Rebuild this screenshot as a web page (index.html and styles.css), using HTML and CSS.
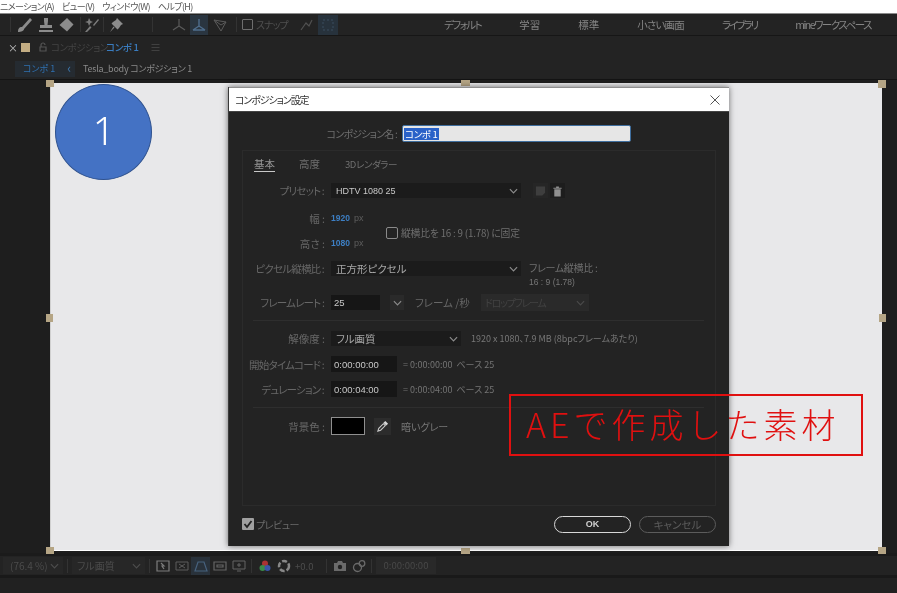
FILE: index.html
```html
<!DOCTYPE html>
<html lang="ja">
<head>
<meta charset="utf-8">
<title>コンポジション設定</title>
<link rel="stylesheet" href="styles.css">
</head>
<body>
<div class="app">
  <div class="menubar">
    <span>ニメーション(A)</span><span>ビュー(V)</span><span>ウィンドウ(W)</span><span>ヘルプ(H)</span>
  </div>

  <div class="toolbar">
    <div class="tools">
      <span class="tsep"></span>
      <svg class="ti t-brush" viewBox="0 0 16 16"><path d="M1 15c0-3 1-5 4-5l8-9 2 2-8 9c0 2-3 3-6 3z" fill="#8c8c8c"/></svg>
      <svg class="ti t-stamp" viewBox="0 0 16 16"><path d="M6 1h4v3L9.500 8H14v3H2V8h4.500L6 4zM1 13h14v2H1z" fill="#8c8c8c"/></svg>
      <svg class="ti t-eraser" viewBox="0 0 16 16"><path d="M9 1l6.500 6.500L9 14.500 1.500 8z" fill="#8c8c8c"/></svg>
      <span class="tsep s-a"></span>
      <svg class="ti t-roto" viewBox="0 0 16 16"><path d="M1 15l5-6 1.500 1.500L3 15zM9 8l5-6 1 1-5 6zM5 1l1.500 3L9 5 6.500 6 5 9 4 6 1 5l3-1z" fill="#7c7c7c"/></svg>
      <span class="tsep s-b"></span>
      <svg class="ti t-pin" viewBox="0 0 16 16"><path d="M9 1l6 6-2 1-2 3-1.500 1.500L3.500 6.500 5 5l3-2zM5.500 9.500l1 1L2 15z" fill="#8c8c8c"/></svg>
      <span class="tsep s-c"></span>
      <svg class="ti t-axis" viewBox="0 0 16 16"><path d="M8 2v7M8 9l-6 4M8 9l6 4" stroke="#5a5a5a" fill="none" stroke-width="1.200"/></svg>
      <span class="ti-on"><svg class="ti" viewBox="0 0 16 16"><path d="M8 2v7M8 9l-6 4M8 9l6 4M2 13h12" stroke="#4f6d8c" fill="none" stroke-width="1.400"/></svg></span>
      <svg class="ti t-axis3" viewBox="0 0 16 16"><path d="M2 3l12 2-5 9zM2 3l7 5 5-3" stroke="#5a5a5a" fill="none"/></svg>
      <span class="tsep s-d"></span>
      <span class="snapbox"></span>
      <span class="snaptext">スナップ</span>
      <svg class="ti t-snap" viewBox="0 0 16 16"><path d="M2 13l5-7 3 3 3-6" stroke="#505050" fill="none" stroke-width="1.200"/></svg>
      <span class="ti-on ti-on2"><svg class="ti" viewBox="0 0 16 16"><path d="M3 3h10v10H3z" stroke="#3a4c5e" fill="none" stroke-dasharray="2 2"/></svg></span>
    </div>
    <div class="workspaces">
      <span class="kana">デフォルト</span><span>学習</span><span>標準</span><span class="kana-s">小さい画面</span><span class="kana kana-l">ライブラリ</span><span class="kana">mineワークスペース</span>
    </div>
  </div>

  <div class="tabrow">
    <span class="tab-x">×</span>
    <span class="tab-swatch"></span>
    <svg class="tab-lock" viewBox="0 0 10 10"><path d="M2 5h6v4H2zM3 5V3a2 2 0 0 1 4 0" stroke="#555" fill="none" stroke-width="1.200"/></svg>
    <span class="tab-dim">コンポジション</span><span class="tab-name">コンポ 1</span>
    <span class="tab-menu">≡</span>
  </div>

  <div class="crumbs">
    <span class="crumb-on">コンポ 1<span class="crumb-chev">‹</span></span>
    <span class="crumb-next">Tesla_body コンポジション 1</span>
  </div>

  <div class="viewer">
    <div class="stage">
      <i class="h h-tl"></i><i class="h h-tc"></i><i class="h h-tr"></i>
      <i class="h h-ml"></i><i class="h h-mr"></i>
      <i class="h h-bl"></i><i class="h h-bc"></i><i class="h h-br"></i>
      <div class="circle">1</div>
    </div>
  </div>

  <div class="viewbar">
    <span class="vb-box vb-zoom">(76.4 %)<svg class="chev" viewBox="0 0 10 6"><path d="M1 1l4 4 4-4"/></svg></span>
    <span class="vsep vsep-z"></span>
    <span class="vb-box vb-qual">フル画質<svg class="chev" viewBox="0 0 10 6"><path d="M1 1l4 4 4-4"/></svg></span>
    <span class="vsep vsep-q"></span>
    <svg class="vi" viewBox="0 0 14 14"><path d="M1 2h12v10H1zM5 4l3 3H6l2 3" stroke="#7d7d7d" fill="none" stroke-width="1.200"/></svg>
    <svg class="vi" viewBox="0 0 14 14"><path d="M1 3h12v8H1zM4 5l6 4M10 5l-6 4" stroke="#5c5c5c" fill="none"/></svg>
    <span class="vi-on"><svg class="vi" viewBox="0 0 14 14"><path d="M1 12l3-9h6l3 9z" stroke="#47627e" fill="none" stroke-width="1.200"/></svg></span>
    <svg class="vi" viewBox="0 0 14 14"><path d="M1 3h12v8H1zM4 6h6v2H4z" stroke="#656565" fill="none" stroke-width="1.200"/></svg>
    <svg class="vi" viewBox="0 0 14 14"><path d="M1 2h12v8H1zM7 4v4M5 6h4M5 12h4" stroke="#656565" fill="none"/></svg>
    <span class="vsep vsep-i"></span>
    <svg class="vi" viewBox="0 0 14 14"><circle cx="7" cy="4.500" r="3" fill="#a33"/><circle cx="4.500" cy="9" r="3" fill="#3a8a4a"/><circle cx="9.500" cy="9" r="3" fill="#3a55a8"/></svg>
    <svg class="vi" viewBox="0 0 14 14"><circle cx="7" cy="7" r="5" stroke="#888" stroke-width="2.500" fill="none" stroke-dasharray="5 2"/></svg>
    <span class="vb-exp">+0.0</span>
    <span class="vsep vsep-a"></span>
    <svg class="vi" viewBox="0 0 14 14"><path d="M1 4h3l1-2h4l1 2h3v8H1z" fill="#6a6a6a"/><circle cx="7" cy="8" r="2.200" fill="#222"/></svg>
    <svg class="vi" viewBox="0 0 14 14"><circle cx="5.500" cy="8.500" r="4" stroke="#6a6a6a" fill="none" stroke-width="1.300"/><circle cx="10" cy="4.500" r="2.800" stroke="#6a6a6a" fill="none" stroke-width="1.300"/></svg>
    <span class="vsep vsep-b"></span>
    <span class="vb-time">0:00:00:00</span>
  </div>
  <div class="strip"></div>

  <div class="dialog">
    <div class="dlg-title">
      <span class="dlg-name">コンポジション設定</span>
      <svg class="dlg-close" viewBox="0 0 10 10"><path d="M.5.500l9 9M9.500.500l-9 9"/></svg>
    </div>
    <div class="dlg-body">
      <div class="name-row">
        <label class="name-label">コンポジション名 :</label>
        <div class="name-input"><span class="sel">コンポ 1</span></div>
      </div>

      <div class="group">
        <div class="tabs">
          <span class="tabs-on">基本</span><span>高度</span><span>3Dレンダラー</span>
        </div>

        <div class="row row-preset">
          <label class="lb lb-kana">プリセット :</label>
          <div class="select sel-wide strong">HDTV 1080 25<svg class="chev" viewBox="0 0 10 6"><path d="M1 1l4 4 4-4"/></svg></div>
          <span class="ico-btn ico-save"><svg viewBox="0 0 12 12"><path d="M1 1h10v7l-3 3H1z" fill="#3e3e3e"/></svg></span>
          <span class="ico-btn ico-trash"><svg viewBox="0 0 12 12"><path d="M1.500 2.500h9v1h-9zM4.500 1h3v1.500h-3zM2.500 4h7v8h-7z" fill="#8f8f8f"/></svg></span>
        </div>

        <div class="dims">
          <div class="dims-col">
            <div class="row"><label class="lb">幅 :</label><span class="blue">1920</span><span class="unit">px</span></div>
            <div class="row"><label class="lb">高さ :</label><span class="blue">1080</span><span class="unit">px</span></div>
          </div>
          <div class="lock"><span class="check"></span><span>縦横比を 16 : 9 (1.78) に固定</span></div>
        </div>

        <div class="row row-pixel">
          <label class="lb lb-kana">ピクセル縦横比 :</label>
          <div class="select sel-wide light">正方形ピクセル<svg class="chev" viewBox="0 0 10 6"><path d="M1 1l4 4 4-4"/></svg></div>
          <div class="aspect">
            <div>フレーム縦横比 :</div>
            <div class="aspect-val">16 : 9 (1.78)</div>
          </div>
        </div>

        <div class="row row-rate">
          <label class="lb lb-kana">フレームレート :</label>
          <div class="field field-rate">25</div>
          <span class="rate-chev"><svg class="chev" viewBox="0 0 10 6"><path d="M1 1l4 4 4-4"/></svg></span>
          <span class="rate-unit">フレーム /秒</span>
          <div class="drop"><span class="drop-text">ドロップフレーム</span><svg class="chev" viewBox="0 0 10 6"><path d="M1 1l4 4 4-4"/></svg></div>
        </div>

        <div class="hr hr-a"></div>

        <div class="row row-res">
          <label class="lb">解像度 :</label>
          <div class="select sel-res light">フル画質<svg class="chev" viewBox="0 0 10 6"><path d="M1 1l4 4 4-4"/></svg></div>
          <span class="info">1920 x 1080、7.9 MB (8bpcフレームあたり)</span>
        </div>

        <div class="row row-start">
          <label class="lb lb-kana">開始タイムコード :</label>
          <div class="field field-time">0:00:00:00</div>
          <span class="eq">= 0:00:00:00&nbsp; ベース 25</span>
        </div>

        <div class="row row-dur">
          <label class="lb lb-kana">デュレーション :</label>
          <div class="field field-time">0:00:04:00</div>
          <span class="eq">= 0:00:04:00&nbsp; ベース 25</span>
        </div>

        <div class="hr hr-b"></div>

        <div class="row row-bg">
          <label class="lb">背景色 :</label>
          <span class="swatch"></span>
          <span class="dropper"><svg viewBox="0 0 14 14"><path d="M2 12l1-3 5-5 2 2-5 5z" fill="none" stroke="#c8c8c8" stroke-width="1.200"/><path d="M8 3l2-2 3 3-2 2z" fill="#d8d8d8"/></svg></span>
          <span class="bg-name">暗いグレー</span>
        </div>
      </div>

      <div class="footer">
        <div class="preview">
          <span class="pv-check"><svg viewBox="0 0 12 12"><path d="M2.500 6l2.500 3 4.500-6" fill="none" stroke="#222" stroke-width="1.800"/></svg></span>
          <span>プレビュー</span>
        </div>
        <div class="btns">
          <span class="btn btn-ok">OK</span>
          <span class="btn btn-cancel">キャンセル</span>
        </div>
      </div>
    </div>
  </div>

  <div class="callout">AEで作成した素材</div>
</div>
</body>
</html>
```

FILE: styles.css
```css
* { box-sizing: border-box; }
html, body { margin: 0; padding: 0; }
body {
  width: 897px;
  height: 593px;
  overflow: hidden;
  background: #1e1e1e;
  font-family: "Noto Sans CJK JP", "Noto Sans", sans-serif;
  font-feature-settings: "palt";
}
.app {
  position: relative;
  width: 897px;
  height: 593px;
  overflow: hidden;
  display: flex;
  flex-direction: column;
  filter: blur(0.35px);
}

/* menu */
.menubar {
  height: 13px;
  flex: none;
  background: #fff;
  display: flex;
  align-items: center;
  gap: 8px;
  font-size: 9px;
  letter-spacing: -0.6px;
  line-height: 13px;
  color: #555;
  white-space: nowrap;
  overflow: hidden;
}

/* top toolbar */
.toolbar {
  height: 23px;
  flex: none;
  background: #232323;
  border-top: 1px solid #8a8a8a;
  border-bottom: 1px solid #161616;
  display: flex;
  align-items: center;
  justify-content: space-between;
}
.tools { display: flex; align-items: center; padding-left: 10px; }
.ti { width: 16px; height: 16px; flex: none; display: block; }
.tsep { width: 1px; height: 15px; background: #333; flex: none; }
.t-brush { margin-left: 6px; }
.t-stamp { margin-left: 5px; }
.t-eraser { margin-left: 4px; }
.s-a { margin-left: 6px; }
.t-roto { margin-left: 3px; }
.s-b { margin-left: 3px; }
.t-pin { margin-left: 4px; }
.s-c { margin-left: 28px; }
.t-axis { margin-left: 18px; }
.ti-on { background: #2a3540; padding: 2px 1px; margin-left: 3px; }
.t-axis3 { margin-left: 4px; }
.s-d { margin-left: 8px; }
.snapbox { width: 11px; height: 11px; border: 1.500px solid #6e6e6e; border-radius: 1px; margin-left: 5px; flex: none; }
.snaptext { font-size: 10px; letter-spacing: -1px; color: #4f4f4f; margin-left: 3px; width: 30px; white-space: nowrap; }
.t-snap { margin-left: 13px; }
.ti-on2 { background: #27323c; padding: 2px; margin-left: 3px; }
.workspaces {
  display: flex;
  gap: 38px;
  padding-right: 26px;
  font-size: 10.500px;
  color: #858585;
  white-space: nowrap;
}
.kana { letter-spacing: -1.500px; }
.kana-l { letter-spacing: -2px; }
.kana-s { letter-spacing: -0.800px; }

/* panel tab */
.tabrow {
  height: 22px;
  flex: none;
  background: #232323;
  display: flex;
  align-items: center;
  padding-left: 8px;
  font-size: 9.500px;
  white-space: nowrap;
}
.tab-x { color: #c0c0c0; font-size: 10px; width: 13px; }
.tab-swatch { width: 9px; height: 9px; background: #c3ad83; }
.tab-lock { width: 10px; height: 10px; margin-left: 8px; }
.tab-dim { color: #444; margin-left: 3px; width: 55px; letter-spacing: -0.500px; }
.tab-name { color: #3a7cbf; width: 40px; font-weight: 500; letter-spacing: -0.300px; }
.tab-menu { color: #4a4a4a; font-size: 11px; margin-left: 4px; }

/* breadcrumbs */
.crumbs {
  height: 22px;
  flex: none;
  background: #232323;
  border-bottom: 1px solid #141414;
  display: flex;
  align-items: center;
  padding-left: 15px;
  font-size: 9px;
  white-space: nowrap;
}
.crumb-on {
  background: #252b31;
  color: #2f70b0;
  height: 16px;
  width: 60px;
  line-height: 16px;
  padding-left: 8px;
  display: flex;
}
.crumb-chev { margin-left: 12px; color: #3d74a8; font-size: 13px; line-height: 14px; }
.crumb-next { color: #8a8a8a; margin-left: 8px; letter-spacing: -0.250px; }

/* viewer */
.viewer {
  flex: 1;
  min-height: 0;
  background: #1e1e1e;
  padding: 3px 15px 2px 50px;
  display: flex;
}
.stage {
  position: relative;
  flex: 1;
  background: #e8e8ea;
  border-left: 1px solid #d0d0d0;
  border-bottom: 1.500px solid #fff;
}
.h { position: absolute; width: 8px; height: 7px; background: #b5a585; }
.h-tl { left: -5px; top: -3px; }
.h-tc { left: 410px; top: -3px; width: 9px; height: 6px; }
.h-tr { right: -4px; top: -3px; height: 8px; }
.h-ml { left: -5px; top: 231px; width: 7px; height: 8px; }
.h-mr { right: -4px; top: 231px; width: 7px; height: 8px; }
.h-bl { left: -5px; bottom: -4px; }
.h-bc { left: 410px; bottom: -4px; width: 9px; height: 6px; }
.h-br { right: -4px; bottom: -4px; }
.circle {
  position: absolute;
  left: 4px;
  top: 1px;
  width: 97px;
  height: 96px;
  padding: 0 0 5px 1px;
  border-radius: 50%;
  background: #4472c4;
  border: 1.500px solid #2f528f;
  color: #fff;
  font-family: "Noto Sans", sans-serif;
  font-weight: 300;
  font-size: 39px;
  display: flex;
  align-items: center;
  justify-content: center;
}

/* bottom viewer bar */
.viewbar {
  height: 25px;
  flex: none;
  background: #232323;
  border-top: 3px solid #1b1b1b;
  border-bottom: 3px solid #191919;
  display: flex;
  align-items: center;
  padding-left: 3px;
  font-size: 10px;
  color: #4c4c4c;
  white-space: nowrap;
}
.strip { height: 15px; flex: none; background: #212121; }
.vb-box {
  height: 17px;
  background: #272727;
  display: flex;
  align-items: center;
  justify-content: space-between;
  padding: 0 4px 0 7px;
  flex: none;
}
.vb-zoom { width: 60px; }
.vb-qual { width: 73px; margin-left: 4px; padding-left: 5px; }
.vb-box .chev { stroke: #4d4d4d; }
.vi { width: 14px; height: 14px; flex: none; margin: 0 2.500px; display: block; }
.vi-on { background: #29323b; height: 18px; display: flex; align-items: center; }
.vsep { width: 1px; height: 14px; background: #333; flex: none; }
.vsep-z { margin-left: 4px; }
.vsep-q { margin-left: 4px; margin-right: 3px; }
.vsep-i { margin-left: 3px; margin-right: 3px; }
.vb-exp { color: #4d4d4d; margin-left: 2px; width: 22px; font-size: 9.500px; }
.vsep-a { margin: 0 3px 0 9px; }
.vsep-b { margin: 0 0 0 3px; }
.vb-time {
  background: #292929;
  height: 17px;
  width: 60px;
  line-height: 17px;
  text-align: center;
  color: #484848;
  font-size: 9.500px;
  margin-left: 4px;
  flex: none;
}

/* dialog */
.dialog {
  position: absolute;
  left: 228px;
  top: 87px;
  width: 501px;
  height: 459px;
  display: flex;
  flex-direction: column;
  box-shadow: 0 0 6px rgba(0, 0, 0, 0.55);
  border-left: 1px solid #3a3a3a;
}
.dlg-title {
  height: 25px;
  flex: none;
  background: #fff;
  border-top: 1px solid #8f8f8f;
  border-bottom: 1px solid #444;
  display: flex;
  align-items: center;
  justify-content: space-between;
  padding: 0 9px 0 6px;
  font-size: 10px;
  color: #333;
}
.dlg-name { letter-spacing: -1.100px; }
.dlg-close { width: 10px; height: 10px; stroke: #555; stroke-width: 1; fill: none; }
.dlg-body {
  flex: 1;
  background: #232323;
  padding: 13px 13px 0 13px;
  display: flex;
  flex-direction: column;
  font-size: 10px;
  color: #8a8a8a;
  white-space: nowrap;
}
.name-row { height: 17px; display: flex; align-items: center; }
.name-label { width: 160px; padding-right: 5px; text-align: right; color: #6f6f6f; letter-spacing: -0.800px; }
.name-input {
  width: 229px;
  height: 17px;
  background: #e6e6e6;
  border: 1px solid #3f6e9e;
  border-radius: 2px;
  padding-left: 1px;
  display: flex;
  align-items: center;
  font-size: 9.500px;
  letter-spacing: -0.300px;
}
.sel { background: #2a62c8; color: #fff; padding: 0 1px; line-height: 12px; }

.group {
  height: 356px;
  margin-top: 8px;
  border: 1px solid #2b2b2b;
  padding-top: 6px;
  display: flex;
  flex-direction: column;
}
.tabs {
  display: flex;
  height: 15px;
  padding-left: 11px;
  gap: 24px;
  font-size: 10.500px;
  line-height: 14px;
  color: #6f6f6f;
}
.tabs span { height: 15px; }
.tabs-on { color: #949494; border-bottom: 1.500px solid #c8c8c8; }
.tabs span:last-child { font-size: 9.500px; letter-spacing: -0.400px; margin-left: 1px; }

.row { display: flex; align-items: center; height: 15px; }
.lb { width: 83px; flex: none; text-align: right; color: #676767; padding-right: 1px; font-size: 10.500px; }
.lb-kana { letter-spacing: -0.800px; padding-right: 2px; }
.chev { width: 9px; height: 6px; flex: none; fill: none; stroke: #8c8c8c; stroke-width: 1.300; }

.select {
  margin-left: 5px;
  height: 15px;
  background: #1b1b1b;
  display: flex;
  align-items: center;
  justify-content: space-between;
  padding: 0 3px 0 5px;
  flex: none;
}
.sel-wide { width: 190px; }
.sel-res { width: 130px; }
.strong { color: #c8c8c8; font-size: 9px; font-weight: 500; font-family: "Liberation Sans", sans-serif; }
.light { color: #a8a8a8; font-size: 10.500px; }
.row-preset { margin-top: 11px; }
.ico-btn { width: 15px; height: 15px; display: flex; align-items: center; justify-content: center; flex: none; background: #262626; }
.ico-btn svg { width: 11px; height: 12px; display: block; }
.ico-save { margin-left: 12px; }
.ico-trash { margin-left: 2px; background: #1d1d1d; }

.dims { margin-top: 13px; height: 39px; display: flex; }
.dims-col { width: 143px; display: flex; flex-direction: column; justify-content: space-between; }
.dims-col .row { height: 14px; }
.blue { color: #3d7fc4; margin-left: 5px; font-size: 8.500px; font-family: "Liberation Sans", sans-serif; font-weight: 700; }
.unit { color: #5e5e5e; margin-left: 4px; font-size: 9px; font-family: "Liberation Sans", sans-serif; }
.lock { display: flex; align-items: center; margin-top: 14px; height: 15px; font-size: 9.800px; letter-spacing: -0.200px; color: #6f6f6f; }
.check { width: 12px; height: 12px; border: 1.500px solid #8a8a8a; border-radius: 2px; margin-right: 3px; flex: none; }

.row-pixel { margin-top: 11px; }
.aspect { margin-left: 8px; color: #6f6f6f; height: 15px; line-height: 14px; font-size: 10px; letter-spacing: -0.300px; }
.aspect-val { color: #777; font-size: 8.500px; line-height: 12px; margin-top: 1px; font-family: "Liberation Sans", sans-serif; letter-spacing: 0; }
.row-rate { margin-top: 19px; }
.field {
  margin-left: 5px;
  height: 15px;
  background: #161616;
  color: #c8c8c8;
  display: flex;
  align-items: center;
  padding-left: 3px;
  flex: none;
  font-size: 9.500px;
  font-family: "Liberation Sans", sans-serif;
}
.field-rate { width: 49px; }
.rate-chev { width: 14px; height: 15px; margin-left: 10px; background: #2a2a2a; display: flex; align-items: center; justify-content: center; flex: none; }
.rate-unit { margin-left: 11px; width: 66px; color: #676767; font-size: 10.500px; }
.drop {
  width: 108px;
  height: 17px;
  background: #2a2a2a;
  color: #424242;
  display: flex;
  align-items: center;
  justify-content: space-between;
  padding: 0 4px 0 4px;
  font-size: 10px;
  flex: none;
}
.drop-text { letter-spacing: -1.300px; }
.drop .chev { stroke: #4a4a4a; }
.hr { height: 1px; background: #2e2e2e; margin: 0 11px 0 10px; flex: none; }
.hr-a { margin-top: 10px; }
.row-res { margin-top: 10px; }
.info { margin-left: 10px; color: #777; font-size: 9px; }
.row-start { margin-top: 10px; height: 16px; }
.row-dur { margin-top: 9px; height: 16px; }
.field-time { width: 66px; height: 16px; }
.eq { margin-left: 6px; color: #747474; font-size: 9px; }
.hr-b { margin-top: 10px; }
.row-bg { margin-top: 9px; height: 18px; }
.swatch { width: 34px; height: 18px; margin-left: 5px; background: #000; border: 1.500px solid #8f8f8f; flex: none; }
.dropper { width: 17px; height: 17px; margin-left: 9px; background: #2c2c2c; display: flex; align-items: center; justify-content: center; flex: none; }
.dropper svg { width: 13px; height: 13px; display: block; }
.bg-name { margin-left: 10px; color: #777; font-size: 10px; }

.footer {
  height: 18px;
  margin-top: 9px;
  display: flex;
  align-items: center;
  justify-content: space-between;
}
.preview { display: flex; align-items: center; gap: 2px; color: #6a6a6a; font-size: 10px; letter-spacing: -0.500px; }
.pv-check { width: 12px; height: 12px; background: #a0a0a0; border-radius: 1px; display: block; }
.pv-check svg { width: 12px; height: 12px; display: block; }
.btns { display: flex; gap: 8px; }
.btn {
  width: 77px;
  height: 17px;
  border-radius: 9px;
  display: flex;
  align-items: center;
  justify-content: center;
  font-size: 9px;
}
.btn-ok { border: 1.500px solid #d8d8d8; color: #d0d0d0; font-family: "Liberation Sans", sans-serif; font-weight: 700; }
.btn-cancel { border: 1.500px solid #5c5c5c; color: #5c5c5c; font-size: 10.500px; }

/* annotation */
.callout {
  position: absolute;
  left: 509px;
  top: 394px;
  width: 354px;
  height: 62px;
  border: 2px solid #e01010;
  color: #e01010;
  font-size: 34px;
  font-weight: 300;
  font-feature-settings: normal;
  line-height: 56px;
  padding-left: 15px;
  letter-spacing: 4px;
  white-space: nowrap;
}
```
